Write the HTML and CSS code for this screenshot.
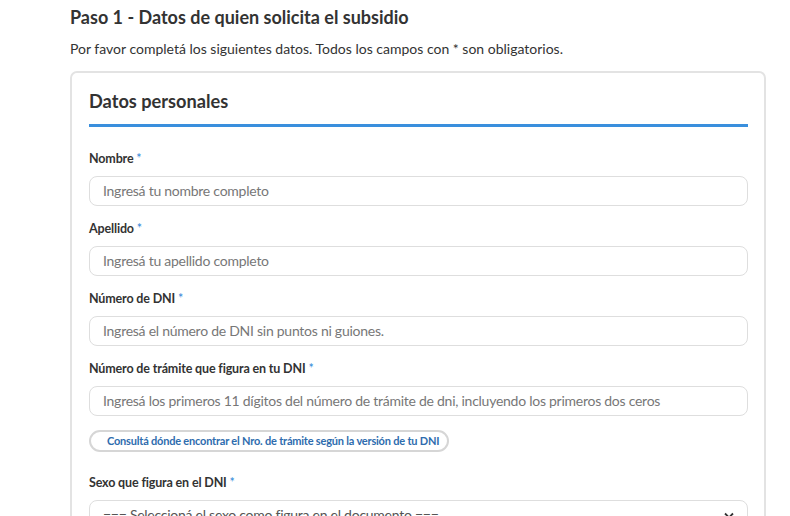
FILE: index.html
```html
<!DOCTYPE html>
<html lang="es">
<head>
<meta charset="utf-8">
<link rel="stylesheet" href="styles.css">
</head>
<body>
<main class="page">
  <h1 class="title">Paso 1 - Datos de quien solicita el subsidio</h1>
  <p class="intro">Por favor completá los siguientes datos. Todos los campos con * son obligatorios.</p>
  <section class="card">
    <h2 class="card-title">Datos personales</h2>
    <div class="field">
      <label class="label">Nombre <span class="req">*</span></label>
      <div class="input">Ingresá tu nombre completo</div>
    </div>
    <div class="field">
      <label class="label">Apellido <span class="req">*</span></label>
      <div class="input">Ingresá tu apellido completo</div>
    </div>
    <div class="field">
      <label class="label">Número de DNI <span class="req">*</span></label>
      <div class="input">Ingresá el número de DNI sin puntos ni guiones.</div>
    </div>
    <div class="field">
      <label class="label">Número de trámite que figura en tu DNI <span class="req">*</span></label>
      <div class="input">Ingresá los primeros 11 dígitos del número de trámite de dni, incluyendo los primeros dos ceros</div>
    </div>
    <button class="pill">Consultá dónde encontrar el Nro. de trámite según la versión de tu DNI</button>
    <div class="field field-sexo">
      <label class="label">Sexo que figura en el DNI <span class="req">*</span></label>
      <div class="input select">
        <span>=== Seleccioná el sexo como figura en el documento ===</span>
        <svg class="chev" width="10" height="7" viewBox="0 0 10 7"><path d="M1 1.5 L5 5.5 L9 1.5" fill="none" stroke="#333" stroke-width="1.8"/></svg>
      </div>
    </div>
  </section>
</main>
</body>
</html>
```
FILE: styles.css
```css
* { box-sizing: border-box; }
html, body { margin: 0; padding: 0; background: #fff; overflow: hidden; }
body { font-family: Lato, "Noto Sans", sans-serif; color: #333; height: 516px; }
.page { padding: 5px 24px 0 70px; }
.title { font-size: 18px; font-weight: 700; color: #333; margin: 0; line-height: 24px; }
.intro { font-size: 14px; margin: 10px 0 0; line-height: 20px; color: #333; }
.card {
  margin-top: 12px;
  border: 2px solid #e3e3e3;
  border-radius: 7px;
  padding: 13px 16px 20px 17px;
}
.card-title {
  font-size: 18.2px; font-weight: 700; margin: 0; line-height: 30px; color: #333;
  padding-bottom: 8px;
  border-bottom: 3px solid #3a8fdd;
  margin-bottom: 23px;
}
.field { margin-bottom: 14px; }
.label {
  display: block; font-size: 12.5px; font-weight: 700; line-height: 18px; color: #333;
  margin-bottom: 8px; letter-spacing: -0.15px;
}
.req { color: #2f86d8; font-weight: 400; }
.input {
  height: 30px; border: 1px solid #dedede; border-radius: 8px;
  padding: 0 13px; font-size: 14px; line-height: 28px; color: #777;
  white-space: nowrap; overflow: hidden; letter-spacing: -0.26px;
}
.pill {
  display: block; margin-top: 0; height: 22px; padding: 0 8px 0 16px;
  border: 2px solid #d6d6d6; border-radius: 12px; background: #fff;
  color: #2e6cae; font-family: inherit; font-weight: 700; font-size: 11px; line-height: 18px;
  white-space: nowrap; letter-spacing: -0.2px;
}
.field-sexo { margin-top: 22px; }
.select { display: flex; justify-content: space-between; align-items: center; color: #555; }
.chev { flex: none; }
```
